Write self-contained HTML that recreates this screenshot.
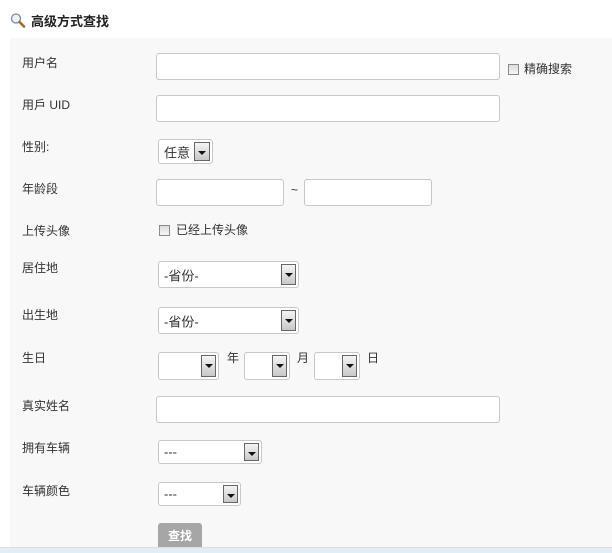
<!DOCTYPE html>
<html><head><meta charset="utf-8"><style>
body{margin:0;width:612px;height:552px;background:#fff;position:relative;overflow:hidden;font-family:"Liberation Sans","Noto Sans CJK SC",sans-serif;font-size:12px;color:#333}
.a{position:absolute}
.panel{left:10px;top:38px;width:602px;height:509px;background:#f8f8f8}
.lbl{left:22px;line-height:14px;color:#333}
.in{background:#fff;border:1px solid #c8c8c8;border-radius:3px;box-sizing:border-box}
.sel{background:#fff;border:1px solid #c8c8c8;border-radius:3px;box-sizing:border-box}
.btn{position:absolute;right:2px;top:2px;bottom:2px;width:15px;border:1px solid #666;box-sizing:border-box;background:linear-gradient(#f4f4f4,#c8c8c8)}
.btn:after{content:"";position:absolute;left:3px;top:8px;border-left:4px solid transparent;border-right:4px solid transparent;border-top:4px solid #111}
.st{position:absolute;left:5px;top:50%;transform:translateY(-50%);font-size:13px;color:#333}
.cb{width:11px;height:11px;border:1px solid #8a8a8a;background:linear-gradient(#ddd,#f6f6f6);box-sizing:border-box}
</style></head><body>
<svg class="a" style="left:10px;top:12px" width="16" height="17" viewBox="0 0 16 17"><circle cx="6" cy="6.5" r="4.5" fill="#eef4fa" stroke="#7a8a9a" stroke-width="1.3"/><path d="M9.5 10l4.5 4.5" stroke="#a06a2a" stroke-width="2.6" stroke-linecap="round"/></svg>
<div class="a" style="left:31px;top:14px;font-size:13px;font-weight:bold;color:#222;line-height:16px">高级方式查找</div>
<div class="a panel"></div>
<div class="a" style="left:0;top:547px;width:612px;height:5px;background:#e6edf2;border-top:1px solid #d6dfe6"></div>

<div class="a lbl" style="top:56px">用户名</div>
<div class="a in" style="left:156px;top:53px;width:344px;height:27px"></div>
<div class="a cb" style="left:508px;top:64px"></div>
<div class="a" style="left:524px;top:62px;line-height:14px">精确搜索</div>

<div class="a lbl" style="top:98px">用戶 UID</div>
<div class="a in" style="left:156px;top:95px;width:344px;height:27px"></div>

<div class="a lbl" style="top:140px">性别:</div>
<div class="a sel" style="left:158px;top:139px;width:55px;height:25px"><span class="st">任意</span><div class="btn" style="width:16px"></div></div>

<div class="a lbl" style="top:182px">年龄段</div>
<div class="a in" style="left:156px;top:179px;width:128px;height:27px"></div>
<div class="a" style="left:291px;top:183px">~</div>
<div class="a in" style="left:304px;top:179px;width:128px;height:27px"></div>

<div class="a lbl" style="top:224px">上传头像</div>
<div class="a cb" style="left:159px;top:225px"></div>
<div class="a" style="left:176px;top:223px;line-height:14px">已经上传头像</div>

<div class="a lbl" style="top:261px">居住地</div>
<div class="a sel" style="left:158px;top:261px;width:141px;height:27px"><span class="st">-省份-</span><div class="btn"></div></div>

<div class="a lbl" style="top:308px">出生地</div>
<div class="a sel" style="left:158px;top:307px;width:141px;height:27px"><span class="st">-省份-</span><div class="btn"></div></div>

<div class="a lbl" style="top:351px">生日</div>
<div class="a sel" style="left:158px;top:352px;width:61px;height:28px"><div class="btn"></div></div>
<div class="a" style="left:227px;top:351px;line-height:14px">年</div>
<div class="a sel" style="left:244px;top:352px;width:46px;height:28px"><div class="btn"></div></div>
<div class="a" style="left:297px;top:351px;line-height:14px">月</div>
<div class="a sel" style="left:314px;top:352px;width:46px;height:28px"><div class="btn"></div></div>
<div class="a" style="left:367px;top:351px;line-height:14px">日</div>

<div class="a lbl" style="top:399px">真实姓名</div>
<div class="a in" style="left:156px;top:396px;width:344px;height:27px"></div>

<div class="a lbl" style="top:441px">拥有车辆</div>
<div class="a sel" style="left:158px;top:440px;width:104px;height:24px"><span class="st">---</span><div class="btn"></div></div>

<div class="a lbl" style="top:484px">车辆颜色</div>
<div class="a sel" style="left:158px;top:482px;width:83px;height:24px"><span class="st">---</span><div class="btn"></div></div>

<div class="a" style="left:158px;top:523px;width:44px;height:24px;background:#a6a6a6;border-radius:3px 3px 0 0;color:#fff;font-weight:bold;font-size:12px;text-align:center;line-height:26px">查找</div>
</body></html>
